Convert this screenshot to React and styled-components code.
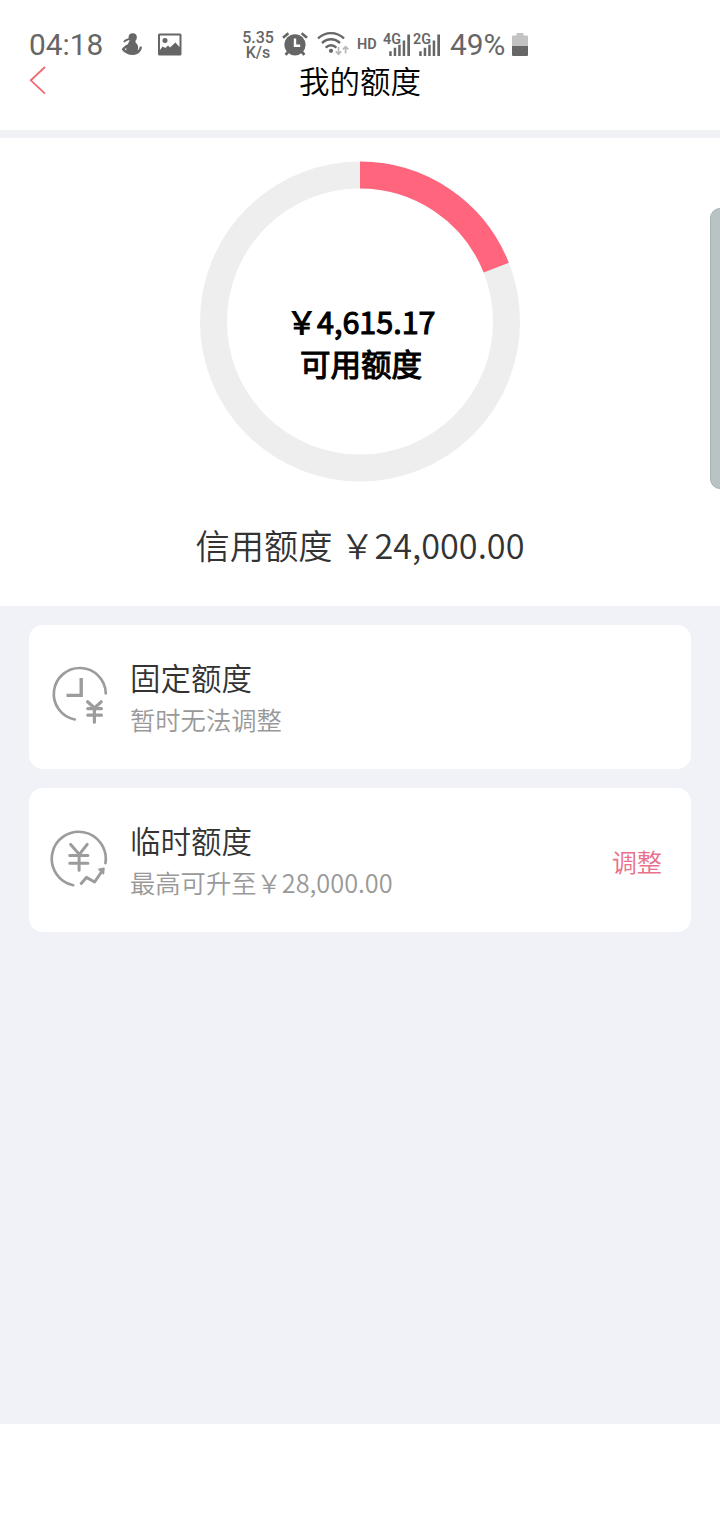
import React from 'react';
import styled, { createGlobalStyle } from 'styled-components';

const CJK_FONT_FAMILY = '"Noto Sans CJK SC", sans-serif';
const STATUS_FONT_FAMILY = 'Roboto, sans-serif';
const PRIMARY_COLOR = '#ff667e';
const STATUS_COLOR = '#666';
const BACKGROUND_COLOR = '#f0f2f7';
const ICON_COLOR = '#9c9c9c';

const GlobalStyle = createGlobalStyle`
    body {
        margin: 0;
        background-color: white;
    }
`;

const Page = styled.div`
    width: 720px;
    height: 1520px;
    position: relative;
    overflow: hidden;
    display: flex;
    flex-direction: column;
    box-sizing: border-box;
    padding-bottom: 96px;
    background-color: white;
    font-family: ${CJK_FONT_FAMILY};
    font-weight: 350;
`;

const StatusBar = styled.div`
    display: flex;
    align-items: center;
    height: 30px;
    padding: 30px 0 0 29px;
    color: ${STATUS_COLOR};
    font-family: ${STATUS_FONT_FAMILY};
    font-weight: 400;
    white-space: nowrap;

    svg {
        display: block;
        flex: none;
        overflow: visible;
    }
`;

const StatusItem = styled.div`
    flex: none;
    width: ${(props) => props.$width}px;
    margin-left: ${(props) => props.$space || 0}px;
`;

const StatusText = styled(StatusItem)`
    font-size: 29.8px;
    line-height: 30px;
`;

const NetworkSpeed = styled(StatusItem)`
    font-size: 16px;
    line-height: 15px;
    font-weight: 500;
    text-align: center;
`;

const HdLabel = styled(StatusItem)`
    font-size: 14.5px;
    line-height: 16px;
    font-weight: 600;
`;

const Header = styled.div`
    display: grid;
    grid-template-columns: 60px 1fr 60px;
    height: 70px;
    border-bottom: 8px solid #f1f2f6;

    .back {
        margin: 6px 0 0 29px;
    }
`;

const Title = styled.h1`
    margin: 0;
    font-size: 30.5px;
    line-height: 40px;
    font-weight: inherit;
    text-align: center;
    color: black;
`;

const Summary = styled.div`
    display: flex;
    flex-direction: column;
    align-items: center;
    height: 467.5px;
    box-sizing: border-box;
    padding-top: 23px;
`;

const Donut = styled.div`
    display: grid;
    width: 320px;
    height: 321px;
    place-items: center;

    > * {
        grid-area: 1 / 1;
    }
`;

const DonutLabel = styled.div`
    padding: 41px 0 0 2px;
    font-size: 30.5px;
    line-height: 42px;
    font-weight: 400;
    text-align: center;
    color: black;
    -webkit-text-stroke: 1.1px black;
`;

const CreditLimit = styled.div`
    margin-top: 38px;
    font-size: 34.25px;
    line-height: 48px;
    color: #333;
    white-space: pre;
`;

const CardList = styled.div`
    flex: 1;
    display: flex;
    flex-direction: column;
    gap: 19px;
    padding: 19px 29px 0;
    background-color: ${BACKGROUND_COLOR};
`;

const Card = styled.div`
    display: flex;
    align-items: center;
    height: 144px;
    box-sizing: border-box;
    padding: 0 29px 0 20px;
    border-radius: 14px;
    background-color: white;
`;

const CardInfo = styled.div`
    flex: 1;
    margin-left: 19px;
`;

const CardName = styled.div`
    font-size: 30.5px;
    line-height: 44px;
    color: #333;
`;

const CardHint = styled.div`
    font-size: 25.3px;
    line-height: 40px;
    color: #999;
`;

const AdjustButton = styled.button`
    border: 0;
    padding: 0;
    margin-top: 3px;
    background: none;
    font-family: inherit;
    font-weight: inherit;
    font-size: 25.2px;
    line-height: 40px;
    color: #e8708a;
`;

// handle of the edge panel, over the page
const EdgeHandle = styled.div`
    position: absolute;
    top: 208px;
    right: -10px;
    width: 20px;
    height: 281px;
    box-sizing: border-box;
    border: 1px solid #aab3b3;
    border-radius: 10px;
    background-color: #b9c3c4;
`;

const AssistantIcon = () => (
    <svg width="22" height="26" viewBox="0 0 22 26" fill={STATUS_COLOR}>
        <circle cx="11.7" cy="5.4" r="4.1" />
        <path d="M3 10C4.2 8 5.8 7.4 9.4 7" fill="none" stroke={STATUS_COLOR} strokeWidth="2" />
        <path
            fillRule="evenodd"
            d="M8.6 8.6H14.4L14.6 10.4C17.2 12.6 17.8 15.6 16.6 18.4C17.8 17.6 18.6 16.4 18.8 14.4L21 14.8C20.6 19.4 17.4 22.8 12 23C7.2 23 3.2 20.8 .6 17.4C2.2 14.8 4.6 13.2 6.8 12.2ZM3.8 17.2C4.3 17.8 4.8 18.2 5.4 18.5C5.1 17.8 5.1 16.8 5.4 16C4.7 16.3 4.2 16.7 3.8 17.2Z"
        />
    </svg>
);

const PictureIcon = () => (
    <svg width="24" height="24" viewBox="0 0 24 24" fill={STATUS_COLOR}>
        <path
            fillRule="evenodd"
            d="M1.5 .5H22Q23.5 .5 23.5 2V21Q23.5 22.5 22 22.5H1.5Q0 22.5 0 21V2Q0 .5 1.5 .5ZM2 2.4V17L4.6 13.6L7.4 15L10 12.6L12 14.4L17.4 9.4L21.5 14V2.4Z"
        />
        <circle cx="7" cy="7.4" r="2.5" />
    </svg>
);

const AlarmIcon = () => (
    <svg width="26" height="26" viewBox="0 0 26 26" fill="none" stroke={STATUS_COLOR}>
        <circle cx="13" cy="12.8" r="10.6" fill={STATUS_COLOR} stroke="none" />
        <path d="M1 5.8L6.4 1.2M25 5.8L19.6 1.2" strokeWidth="2.6" />
        <path d="M6 20L3.6 22.8M20 20L22.4 22.8" strokeWidth="2.8" />
        <path d="M13 6.6V13.8H18.2" stroke="white" strokeWidth="2.4" />
    </svg>
);

const WifiIcon = () => (
    <svg width="32" height="26" viewBox="0 0 32 26" fill="none" stroke={STATUS_COLOR} strokeWidth="2.4">
        <path d="M1 6.4C8.5 -.6 19.5 -.6 27 6.4" />
        <path d="M5 11C10.5 6 17.5 6 23 11" />
        <path d="M8.6 15.6C12.2 12.4 15.8 12.4 19.4 15.6" />
        <circle cx="14" cy="18.8" r="2.1" fill={STATUS_COLOR} stroke="none" />
        <path d="M21.5 15V22M18.8 19.4L21.5 22.2L24.2 19.4" stroke="#b8b8b8" strokeWidth="1.7" />
        <path d="M28.6 21.5V14.8M25.9 17.4L28.6 14.6L31.3 17.4" stroke="#b8b8b8" strokeWidth="1.7" />
    </svg>
);

const SignalIcon = ({ label }) => (
    <svg width="29" height="26" viewBox="0 0 29 26" fill={STATUS_COLOR}>
        <path d="M6.2 19.3H8.7V24H6.2ZM10.7 15.8H13.2V24H10.7ZM15.2 12.5H17.7V24H15.2ZM19.7 8.5H22.2V24H19.7ZM24.3 2.5H27V24H24.3Z" />
        <text
            x="0"
            y="11.6"
            fontSize="14"
            fontWeight="600"
            fontFamily={STATUS_FONT_FAMILY}
            stroke="white"
            strokeWidth="2"
            paintOrder="stroke"
            textLength="18"
            lengthAdjust="spacingAndGlyphs"
        >
            {label}
        </text>
    </svg>
);

const BatteryIcon = () => (
    <svg width="16" height="24" viewBox="0 0 16 24">
        <path d="M4.5 0H11.5V2.5H15Q16 2.5 16 3.5V13H0V3.5Q0 2.5 1 2.5H4.5Z" fill="#c2c2c2" />
        <path d="M0 13H16V22Q16 23 15 23H1Q0 23 0 22Z" fill={STATUS_COLOR} />
    </svg>
);

const BackIcon = () => (
    <svg className="back" width="18" height="30" viewBox="0 0 18 30" fill="none">
        <path d="M16 1L1.8 14.3L16 27.6" stroke="#ee6a6e" strokeWidth="1.8" />
    </svg>
);

const FixedLimitIcon = () => (
    <svg width="62" height="62" viewBox="0 0 62 62" fill="none" stroke={ICON_COLOR} strokeWidth="2.7" strokeLinecap="round">
        <path d="M25.8 53.5A26 26 0 1 1 56.8 27.4" />
        <path d="M32.2 12V29.4H17.5" strokeWidth="3.4" strokeLinecap="butt" />
        <path d="M38.6 35.8L45.5 42L52.2 35.8M38.8 42.7H52.4M38.8 49.2H52.4M45.4 42V56.2" strokeWidth="3.2" />
    </svg>
);

const TemporaryLimitIcon = () => (
    <svg width="62" height="62" viewBox="0 0 62 62" fill="none" stroke={ICON_COLOR} strokeWidth="2.7" strokeLinecap="round">
        <path d="M24.2 56.2A27 27 0 1 1 56.4 34.2" />
        <path d="M21.7 15.4L30.3 25.4L38.2 15.4M20.7 26.4H38.9M20.7 34.2H38.9M30.1 26V41.2" strokeWidth="3" />
        <path d="M32.2 54.4L37.4 48.4L45.6 53L52.4 43" strokeWidth="3" strokeLinejoin="round" />
        <path d="M50 40.4L55 39.4L54.4 44.6Z" fill={ICON_COLOR} strokeWidth="1.6" strokeLinejoin="round" />
    </svg>
);

const LimitChart = ({ available, total }) => {
    const radius = 146.5;
    const length = 2 * Math.PI * radius;
    const percent = Math.floor((available / total) * 100);
    return (
        <svg width="320" height="321" viewBox="0 0 320 321" fill="none" strokeWidth="27">
            <circle cx="160" cy="160.5" r={radius} stroke="#eee" />
            <circle
                cx="160"
                cy="160.5"
                r={radius}
                stroke={PRIMARY_COLOR}
                strokeDasharray={`${(percent / 100) * length} ${length}`}
                transform="rotate(-90 160 160.5)"
            />
        </svg>
    );
};

const limits = [
    { name: '固定额度', hint: '暂时无法调整', Icon: FixedLimitIcon },
    { name: '临时额度', hint: '最高可升至￥28,000.00', Icon: TemporaryLimitIcon, action: '调整' },
];

const App = () => (
    <Page>
        <GlobalStyle />
        <StatusBar>
            <StatusText $width={75}>04:18</StatusText>
            <StatusItem $width={22} $space={17}>
                <AssistantIcon />
            </StatusItem>
            <StatusItem $width={24} $space={15}>
                <PictureIcon />
            </StatusItem>
            <NetworkSpeed $width={32} $space={60}>
                5.35
                <br />
                K/s
            </NetworkSpeed>
            <StatusItem $width={26} $space={8}>
                <AlarmIcon />
            </StatusItem>
            <StatusItem $width={32} $space={9}>
                <WifiIcon />
            </StatusItem>
            <HdLabel $width={20} $space={8}>HD</HdLabel>
            <StatusItem $width={29} $space={6}>
                <SignalIcon label="4G" />
            </StatusItem>
            <StatusItem $width={29} $space={1}>
                <SignalIcon label="2G" />
            </StatusItem>
            <StatusText $width={56} $space={8}>49%</StatusText>
            <StatusItem $width={16} $space={6}>
                <BatteryIcon />
            </StatusItem>
        </StatusBar>

        <Header>
            <BackIcon />
            <Title>我的额度</Title>
        </Header>

        <Summary>
            <Donut>
                <LimitChart available={4615.17} total={24000} />
                <DonutLabel>
                    <div>￥4,615.17</div>
                    <div>可用额度</div>
                </DonutLabel>
            </Donut>
            <CreditLimit>信用额度 ￥24,000.00</CreditLimit>
        </Summary>

        <CardList>
            {limits.map(({ name, hint, Icon, action }) => (
                <Card key={name}>
                    <Icon />
                    <CardInfo>
                        <CardName>{name}</CardName>
                        <CardHint>{hint}</CardHint>
                    </CardInfo>
                    {action && <AdjustButton>{action}</AdjustButton>}
                </Card>
            ))}
        </CardList>

        <EdgeHandle />
    </Page>
);

export default App;
